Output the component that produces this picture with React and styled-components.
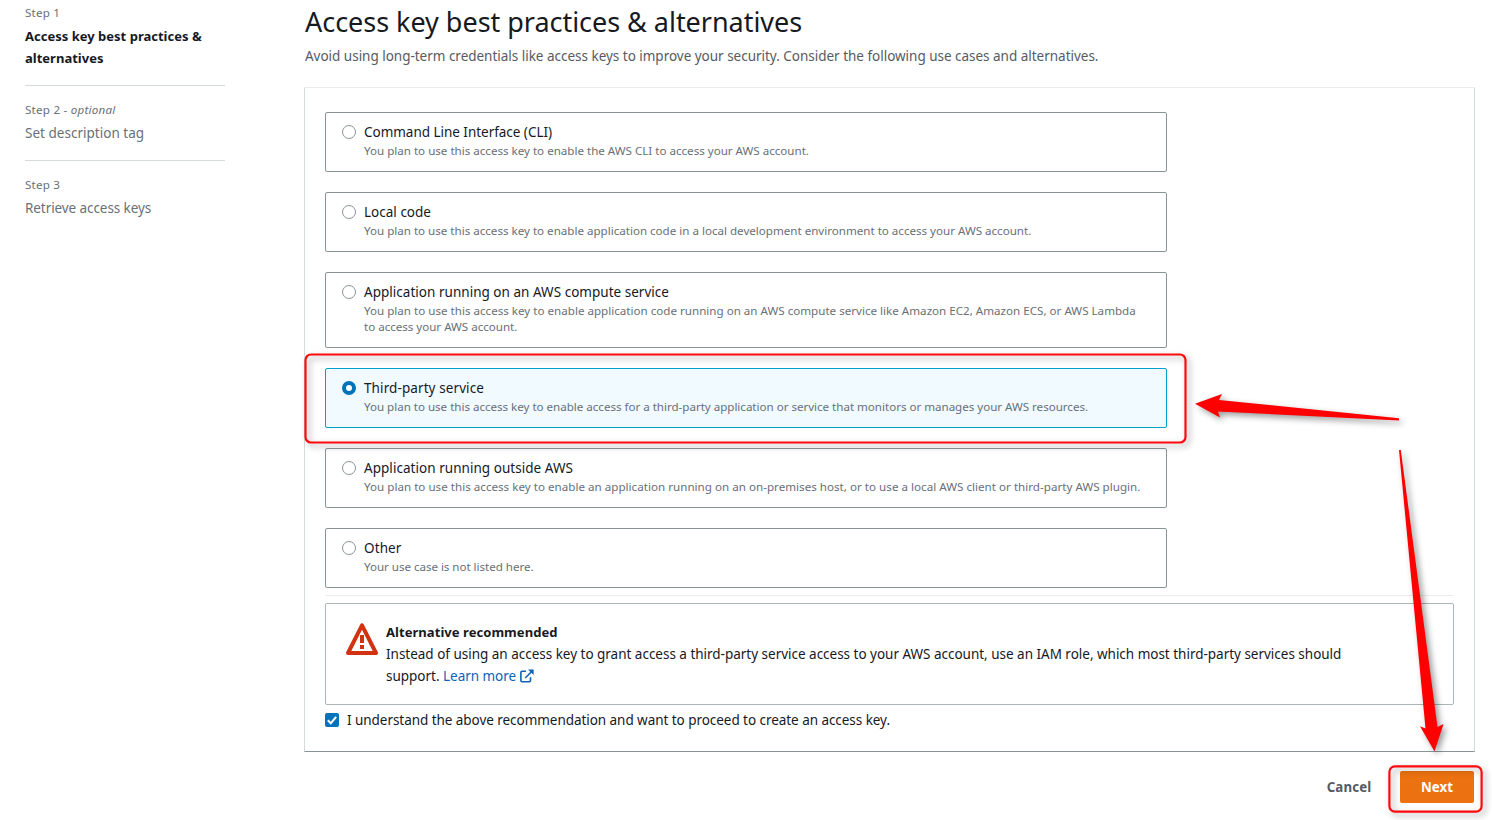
import React from 'react';
import styled, { createGlobalStyle, css } from 'styled-components';

const GlobalStyle = createGlobalStyle`
  *, *::before, *::after { box-sizing: border-box; }
  body {
    margin: 0;
    background: #fff;
    color: #16191f;
    font-family: "Noto Sans", "Open Sans", sans-serif;
    font-size: 13.5px;
    line-height: 22px;
    overflow: hidden;
  }
`;

const tracking = css`
  letter-spacing: ${(p) => p.$track || 0}px;
  white-space: nowrap;
`;

const Page = styled.div`
  position: relative;
  display: flex;
  width: 1492px;
  height: 820px;
  padding: 4px 17px 0 25px;
  overflow: hidden;
`;

const Steps = styled.ol`
  flex: none;
  width: 200px;
  margin: 1px 79px 0 0;
  padding: 0;
  list-style: none;
`;

const Step = styled.li`
  & + & {
    margin-top: 16px;
    padding-top: 16px;
    border-top: 1px solid #d5dbdb;
  }
`;

const StepLabel = styled.div`
  margin-bottom: 4px;
  color: #687078;
  font-size: 11.6px;
  line-height: 16px;
  ${tracking}
`;

const StepTitle = styled.div`
  color: ${(p) => (p.$active ? '#16191f' : '#687078')};
  font-size: ${(p) => (p.$active ? 13 : 13.5)}px;
  font-weight: ${(p) => (p.$active ? 700 : 400)};
  ${tracking}
`;

const Main = styled.main`
  display: flex;
  flex-direction: column;
  width: 1171px;
`;

const Heading = styled.h1`
  margin: 0 0 5px 1px;
  font-size: 27px;
  font-weight: 400;
  line-height: 36px;
  ${tracking}
`;

const Intro = styled.p`
  margin: 0 0 20px 1px;
  color: #545b64;
  ${tracking}
`;

const Card = styled.section`
  display: flex;
  flex-direction: column;
  height: 665px;
  padding: 24px 20px 0;
  border: 1px solid #d5dbdb;
  border-top-color: #eaeded;
  border-bottom-color: #879596;
`;

const Tiles = styled.div`
  display: flex;
  flex-direction: column;
  gap: 20px;
  width: 842px;
`;

const Tile = styled.label`
  display: flex;
  padding: 8px 16px 12px;
  border: 1px solid ${(p) => (p.$selected ? '#00a1c9' : '#879596')};
  border-radius: 2px;
  background: ${(p) => (p.$selected ? '#f1faff' : '#fff')};
`;

const Radio = styled.span`
  flex: none;
  width: 14px;
  height: 14px;
  margin: 4px 8px 0 0;
  border: ${(p) => (p.$selected ? '4px solid #0073bb' : '1px solid #879596')};
  border-radius: 50%;
  background: #fff;
`;

const TileText = styled.div`
  min-width: 0;
`;

const TileTitle = styled.div`
  ${tracking}
`;

const TileDescription = styled.div`
  color: #687078;
  font-size: 11.6px;
  line-height: 16px;
  ${tracking}
`;

const Divider = styled.hr`
  width: 100%;
  height: 1px;
  margin: 7px 0;
  border: 0;
  background: #eaeded;
`;

const Alert = styled.div`
  display: flex;
  gap: 8px;
  height: 102px;
  padding: 17px 20px 0;
  border: 1px solid #aab7b8;
  border-radius: 2px;
`;

const WarningIcon = styled.svg`
  flex: none;
  width: 32px;
  height: 32px;
  margin-top: 2px;
`;

const AlertBody = styled.div`
  min-width: 0;
`;

const AlertTitle = styled.div`
  font-size: 13px;
  font-weight: 700;
  ${tracking}
`;

const AlertLine = styled.div`
  ${tracking}
`;

const Link = styled.a`
  color: #0f62b8;
  ${tracking}
`;

const ExternalIcon = styled.svg`
  width: 14px;
  height: 14px;
  margin-left: 4px;
  vertical-align: -2px;
`;

const Acknowledge = styled.label`
  display: flex;
  align-items: center;
  gap: 8px;
  margin-top: 4px;
`;

const Checkbox = styled.svg`
  width: 14px;
  height: 14px;
`;

const AckText = styled.span`
  ${tracking}
`;

const Actions = styled.div`
  display: flex;
  justify-content: flex-end;
  margin: 19px 1px 0 0;
`;

const Button = styled.button`
  height: 32px;
  padding: 0;
  width: ${(p) => (p.$primary ? 74 : 102)}px;
  border: 0;
  border-radius: 2px;
  background: ${(p) => (p.$primary ? '#ec7211' : 'transparent')};
  color: ${(p) => (p.$primary ? '#fff' : '#545b64')};
  font: 700 13.3px/22px "Noto Sans", "Open Sans", sans-serif;
  ${tracking}
`;

const Annotations = styled.svg`
  position: absolute;
  inset: 0;
  width: 1492px;
  height: 820px;
  pointer-events: none;
`;

const Frame = styled.rect`
  fill: none;
  stroke: #fe0a0c;
  stroke-width: 2.2px;
  filter: drop-shadow(3px 3px 3px rgba(0, 0, 0, 0.36));
`;

const Arrow = styled.path`
  fill: #fe0000;
  filter: drop-shadow(3px 3px 3px rgba(0, 0, 0, 0.4));
`;

const options = [
  {
    title: 'Command Line Interface (CLI)',
    track: -0.028,
    lines: [['You plan to use this access key to enable the AWS CLI to access your AWS account.', -0.005]],
  },
  {
    title: 'Local code',
    track: 0.015,
    lines: [['You plan to use this access key to enable application code in a local development environment to access your AWS account.', -0.006]],
  },
  {
    title: 'Application running on an AWS compute service',
    track: 0.025,
    lines: [
      ['You plan to use this access key to enable application code running on an AWS compute service like Amazon EC2, Amazon ECS, or AWS Lambda', 0.006],
      ['to access your AWS account.', -0.018],
    ],
  },
  {
    title: 'Third-party service',
    track: 0.099,
    selected: true,
    lines: [['You plan to use this access key to enable access for a third-party application or service that monitors or manages your AWS resources.', -0.021]],
  },
  {
    title: 'Application running outside AWS',
    track: 0.042,
    lines: [['You plan to use this access key to enable an application running on an on-premises host, or to use a local AWS client or third-party AWS plugin.', 0.02]],
  },
  {
    title: 'Other',
    track: 0.107,
    lines: [['Your use case is not listed here.', -0.036]],
  },
];

export default function App() {
  return (
    <>
      <GlobalStyle />
      <Page>
        <Steps>
          <Step>
            <StepLabel $track={0.18}>Step 1</StepLabel>
            <StepTitle $active $track={0.01}>
              Access key best practices &amp;
              <br />
              alternatives
            </StepTitle>
          </Step>
          <Step>
            <StepLabel $track={0.23}>
              Step 2 - <em>optional</em>
            </StepLabel>
            <StepTitle $track={0.02}>Set description tag</StepTitle>
          </Step>
          <Step>
            <StepLabel $track={0.18}>Step 3</StepLabel>
            <StepTitle $track={-0.08}>Retrieve access keys</StepTitle>
          </Step>
        </Steps>

        <Main>
          <Heading $track={-0.03}>Access key best practices &amp; alternatives</Heading>
          <Intro $track={-0.016}>
            Avoid using long-term credentials like access keys to improve your security. Consider the following use cases and alternatives.
          </Intro>

          <Card>
            <Tiles>
              {options.map((o) => (
                <Tile key={o.title} $selected={o.selected}>
                  <Radio $selected={o.selected} />
                  <TileText>
                    <TileTitle $track={o.track}>{o.title}</TileTitle>
                    {o.lines.map(([text, track]) => (
                      <TileDescription key={text} $track={track}>
                        {text}
                      </TileDescription>
                    ))}
                  </TileText>
                </Tile>
              ))}
            </Tiles>
            <Divider />
            <Alert>
              <WarningIcon viewBox="0 0 32 32">
                <path d="M16 2.4 L30 30 H2 Z" fill="none" stroke="#d13212" strokeWidth="4" strokeLinejoin="round" />
                <path d="M14 12h4v8h-4zM14 22h4v4h-4z" fill="#d13212" />
              </WarningIcon>
              <AlertBody>
                <AlertTitle $track={0.052}>Alternative recommended</AlertTitle>
                <AlertLine $track={-0.015}>
                  Instead of using an access key to grant access a third-party service access to your AWS account, use an IAM role, which most third-party services should
                </AlertLine>
                <AlertLine $track={-0.015}>
                  support. <Link $track={-0.04}>Learn more</Link>
                  <ExternalIcon viewBox="0 0 14 14" fill="none" stroke="#0f62b8" strokeWidth="1.6">
                    <path d="M6 2.3H2Q0.9 2.3 0.9 3.4V11.6Q0.9 12.7 2 12.7H9.4Q10.5 12.7 10.5 11.6V8.3M5.2 9L11.5 2.7" />
                    <path d="M8 0.5H13.6V6.1Z" fill="#0f62b8" stroke="none" />
                  </ExternalIcon>
                </AlertLine>
              </AlertBody>
            </Alert>
            <Acknowledge>
              <Checkbox viewBox="0 0 14 14">
                <rect width="14" height="14" rx="2" fill="#0073bb" />
                <path d="M2.8 7.2L5.8 10.2L11.2 3.8" fill="none" stroke="#fff" strokeWidth="2" />
              </Checkbox>
              <AckText $track={-0.049}>
                I understand the above recommendation and want to proceed to create an access key.
              </AckText>
            </Acknowledge>
          </Card>

          <Actions>
            <Button $track={0.1}>Cancel</Button>
            <Button $primary>Next</Button>
          </Actions>
        </Main>

        <Annotations viewBox="0 0 1492 820">
          <Frame x="305.5" y="354.5" width="880" height="88" rx="5.5" />
          <Frame x="1389.4" y="766.4" width="92.2" height="45.2" rx="5.5" />
          <Arrow d="M1195 403.7L1222 394L1219 400L1399 418.3V420.5L1218 411.5L1220 417.5Z" />
          <Arrow d="M1399 450H1400.8L1437.5 727L1443.5 724L1434.5 751.5L1420 726.3L1425.5 728.5Z" />
        </Annotations>
      </Page>
    </>
  );
}
